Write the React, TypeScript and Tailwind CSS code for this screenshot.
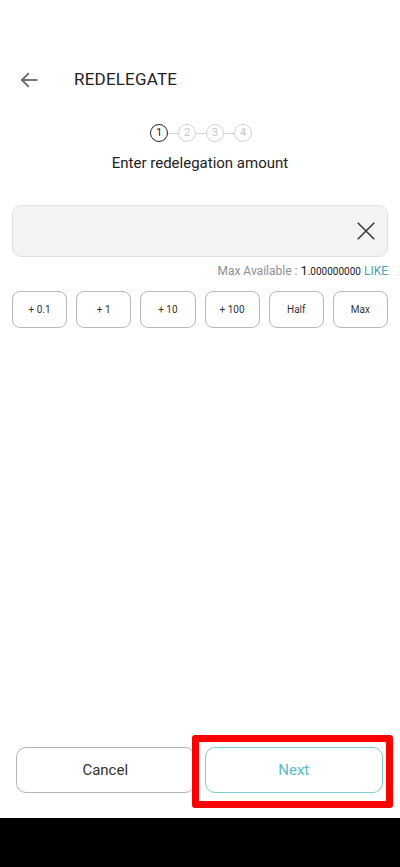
import React, { useState } from 'react';

const STEPS = [1, 2, 3, 4];
const QUICK = ['+ 0.1', '+ 1', '+ 10', '+ 100', 'Half', 'Max'];

const Stepper: React.FC<{ current: number }> = ({ current }) => (
  <div className="flex items-center justify-center pl-[2px]">
    {STEPS.map((s, i) => (
      <React.Fragment key={s}>
        {i > 0 && <div className="w-[10px] h-px bg-[#cfd3d8]" />}
        <div
          className={
            s === current
              ? 'w-[18px] h-[18px] rounded-full border-[1.5px] border-[#222] flex items-center justify-center text-[11px] text-[#222]'
              : 'w-[18px] h-[18px] rounded-full border border-[#cfd3d8] flex items-center justify-center text-[11px] text-[#c3c7cc]'
          }
        >
          {s}
        </div>
      </React.Fragment>
    ))}
  </div>
);

export default function App() {
  const [amount, setAmount] = useState('');

  return (
    <div
      className="relative w-[400px] h-[867px] bg-white flex flex-col overflow-hidden"
      style={{ fontFamily: 'Roboto, "Noto Sans", sans-serif' }}
    >
      {/* Header */}
      <div className="h-[59px] shrink-0" />
      <div className="flex items-center h-[42px] px-[19px]">
        <button className="text-[#6b6b6b]">
          <svg width="20" height="20" viewBox="0 0 24 24" fill="none" stroke="currentColor" strokeWidth="2.2" strokeLinecap="square">
            <path d="M21 12H4" />
            <path d="M11 4.5L3.5 12l7.5 7.5" />
          </svg>
        </button>
        <h1 className="ml-[35px] text-[17px] text-[#222] tracking-[0.2px]">REDELEGATE</h1>
      </div>

      <div className="mt-[23px]">
        <Stepper current={1} />
      </div>
      <p className="mt-[10px] text-center text-[15px] text-[#222]">Enter redelegation amount</p>

      {/* Amount input */}
      <div className="mx-[12px] mt-[30px] h-[52px] rounded-[9px] bg-[#f3f3f3] border border-[#e2e2e2] flex items-center pl-4 pr-[10px]">
        <input
          value={amount}
          onChange={(e) => setAmount(e.target.value)}
          className="flex-1 bg-transparent outline-none text-[16px] text-[#222]"
        />
        <button onClick={() => setAmount('')} className="text-[#333]">
          <svg width="22" height="22" viewBox="0 0 24 24" fill="none" stroke="currentColor" strokeWidth="1.6">
            <path d="M3 3l18 18M21 3L3 21" />
          </svg>
        </button>
      </div>

      <div className="mx-[12px] mt-[4px] flex justify-end items-baseline text-[12px] text-[#8a8f96]">
        <span>Max Available :&nbsp;</span>
        <span className="text-[#222] text-[13px]">1</span>
        <span className="text-[#222] text-[10px]">.000000000</span>
        <span className="ml-[3px] text-[#4b9fb4]">LIKE</span>
      </div>

      <div className="mx-[12px] mt-[11px] grid grid-cols-6 gap-[9px]">
        {QUICK.map((q) => (
          <button
            key={q}
            className="h-[37px] rounded-[8px] border border-[#b9b9b9] bg-white text-[10px] text-[#333]"
          >
            {q}
          </button>
        ))}
      </div>

      <div className="flex-1" />

      {/* Bottom actions */}
      <div className="flex gap-[10px] pl-[16px] pr-[17px]">
        <button className="flex-1 h-[46px] rounded-[10px] border border-[#b5b5b5] text-[15px] text-[#333]">
          Cancel
        </button>
        <button className="flex-1 h-[46px] rounded-[10px] border-[1.5px] border-[#80cdd4] text-[15px] text-[#55bcc6]">
          Next
        </button>
      </div>
      <div className="h-[25px] shrink-0" />
      <div className="h-[49px] shrink-0 bg-black" />

      {/* Highlight overlay */}
      <div className="absolute left-[192px] top-[735px] w-[201px] h-[73px] border-[7px] border-[#ff0000] rounded-[3px] pointer-events-none" />
    </div>
  );
}
